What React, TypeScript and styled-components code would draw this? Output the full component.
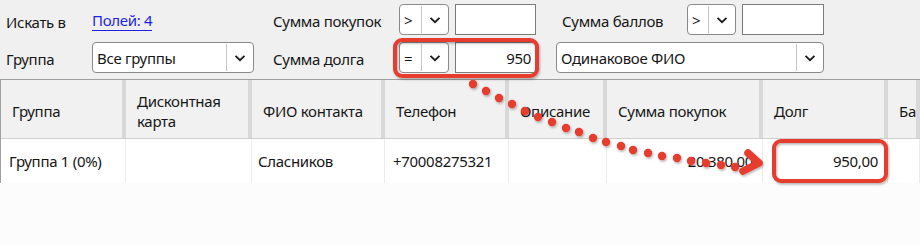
import React from "react";
import styled, { createGlobalStyle } from "styled-components";

const GlobalStyle = createGlobalStyle`
  html, body {
    margin: 0;
    padding: 0;
    background: #fcfcfc;
  }
  body {
    font-family: "Noto Sans", "Open Sans", sans-serif;
    font-size: 15px;
    letter-spacing: -0.3px;
    color: #161616;
  }
`;

const Page = styled.div`
  position: relative;
  width: 920px;
  height: 246px;
  overflow: hidden;
  background: #fcfcfc;
`;

const FilterPanel = styled.div`
  display: grid;
  grid-template-columns: 86px 181px 126px 157px 268px;
  grid-template-rows: 31px 31px;
  row-gap: 7px;
  align-items: center;
  padding: 4px 0 6px 6px;
  background: #f0f0f0;
  border-bottom: 1px solid #a0a0a0;
`;

const Label = styled.span<{ $shift?: number; $indent?: number }>`
  white-space: nowrap;
  padding-top: ${(p) => p.$shift ?? 0}px;
  padding-left: ${(p) => p.$indent ?? 0}px;
`;

const FieldsLink = styled.a`
  justify-self: start;
  color: #1f1fe8;
  text-decoration: none;
  border-bottom: 1px solid #1f1fe8;
  padding-top: 3px;
  line-height: 19px;
  cursor: pointer;
`;

const PointsField = styled.div`
  display: grid;
  grid-template-columns: 131px auto;
  align-items: center;
`;

const Pair = styled.div`
  display: flex;
  gap: 6px;
  height: 31px;
`;

const Combo = styled.div<{ $width: number }>`
  display: flex;
  width: ${(p) => p.$width}px;
  height: 31px;
  box-sizing: border-box;
  border: 1px solid #8a8a8a;
  border-radius: 4px;
  background: #ffffff;
`;

const ComboValue = styled.div`
  flex: 1;
  display: flex;
  align-items: center;
  padding-left: 4px;
  white-space: nowrap;
  overflow: hidden;
`;

const ComboButton = styled.div`
  flex: none;
  width: 26px;
  display: flex;
  align-items: center;
  justify-content: center;
  border-left: 1px solid #c6c6c6;
  margin: 1px 0;
`;

const TextBox = styled.div<{ $width: number }>`
  width: ${(p) => p.$width}px;
  height: 31px;
  box-sizing: border-box;
  border: 1px solid #7a7a7a;
  background: #ffffff;
  display: flex;
  align-items: center;
  justify-content: flex-end;
  padding-right: 4px;
`;

const Grid = styled.div`
  border-left: 1px solid #a0a0a0;
`;

const columns = "125px 126px 133px 124px 98px 156px 125px 1fr";

const HeaderRow = styled.div`
  display: grid;
  grid-template-columns: ${columns};
  height: 59px;
  box-sizing: border-box;
  background: #f1f1f1;
  border-bottom: 1px solid #cfcfcf;
`;

const HeaderCell = styled.div`
  display: flex;
  align-items: center;
  box-sizing: border-box;
  padding: 3px 4px 0 11px;
  line-height: 20px;
  border-right: 4px solid #d8d8d8;
  overflow: hidden;
  white-space: pre-line;
`;

const DataRow = styled.div`
  display: grid;
  grid-template-columns: ${columns};
  height: 44px;
  background: #ffffff;
`;

const DataCell = styled.div<{ $right?: boolean; $padLeft?: number }>`
  display: flex;
  align-items: center;
  justify-content: ${(p) => (p.$right ? "flex-end" : "flex-start")};
  box-sizing: border-box;
  padding: 0 9px 0 ${(p) => p.$padLeft ?? 6}px;
  border-right: 1px solid #ececec;
  white-space: nowrap;
  overflow: hidden;
`;

const Overlay = styled.svg`
  position: absolute;
  left: 0;
  top: 0;
  pointer-events: none;
`;

const Chevron = () => (
  <svg width="12" height="8" viewBox="0 0 12 8">
    <path d="M1.5 1.8 L6 6.2 L10.5 1.8" fill="none" stroke="#1a1a1a" strokeWidth="1.8" />
  </svg>
);

const Select = ({ value, width }: { value: string; width: number }) => (
  <Combo $width={width}>
    <ComboValue>{value}</ComboValue>
    <ComboButton>
      <Chevron />
    </ComboButton>
  </Combo>
);

const headers = [
  "Группа",
  "Дисконтная\nкарта",
  "ФИО контакта",
  "Телефон",
  "Описание",
  "Сумма покупок",
  "Долг",
  "Баллы",
];

const dots: [number, number][] = [
  [473, 84], [486, 91], [499, 98], [512, 104], [525, 111], [538, 117],
  [552, 122], [566, 128], [579, 132], [593, 138], [606, 142], [621, 146],
  [633, 150], [648, 153], [662, 156], [677, 158], [691, 161], [706, 163],
  [721, 165], [735, 167],
];

const RED = "#e63c2e";

export default function App() {
  return (
    <Page>
      <GlobalStyle />
      <FilterPanel>
        <Label $shift={4}>Искать в</Label>
        <FieldsLink>Полей: 4</FieldsLink>
        <Label $shift={3}>Сумма покупок</Label>
        <Pair>
          <Select value=">" width={50} />
          <TextBox $width={81} />
        </Pair>
        <PointsField>
          <Label $shift={3} $indent={6}>
            Сумма баллов
          </Label>
          <Pair>
            <Select value=">" width={49} />
            <TextBox $width={82} />
          </Pair>
        </PointsField>

        <Label $shift={2}>Группа</Label>
        <Select value="Все группы" width={162} />
        <Label $shift={2}>Сумма долга</Label>
        <Pair>
          <Select value="=" width={50} />
          <TextBox $width={81}>950</TextBox>
        </Pair>
        <Select value="Одинаковое ФИО" width={268} />
      </FilterPanel>

      <Grid>
        <HeaderRow>
          {headers.map((h) => (
            <HeaderCell key={h}>{h}</HeaderCell>
          ))}
        </HeaderRow>
        <DataRow>
          <DataCell $padLeft={8}>Группа 1 (0%)</DataCell>
          <DataCell />
          <DataCell>Сласников</DataCell>
          <DataCell $padLeft={8}>+70008275321</DataCell>
          <DataCell />
          <DataCell $right>20 380,00</DataCell>
          <DataCell $right>950,00</DataCell>
          <DataCell />
        </DataRow>
      </Grid>

      <Overlay width="920" height="246" viewBox="0 0 920 246">
        <defs>
          <filter id="shade" x="-20%" y="-20%" width="140%" height="140%">
            <feDropShadow dx="1" dy="1.5" stdDeviation="1" floodColor="#000" floodOpacity="0.3" />
          </filter>
        </defs>
        <g filter="url(#shade)">
          <rect x="395" y="40" width="142" height="36" rx="7" fill="none" stroke={RED} strokeWidth="4" />
          <rect x="774" y="141" width="112" height="40" rx="7" fill="none" stroke={RED} strokeWidth="4" />
          {dots.map(([x, y]) => (
            <circle key={`${x}-${y}`} cx={x} cy={y} r="4.2" fill={RED} />
          ))}
          <polyline
            points="748,153 759,163 743,171"
            fill="none"
            stroke={RED}
            strokeWidth="7.5"
            strokeLinecap="round"
            strokeLinejoin="round"
          />
        </g>
      </Overlay>
    </Page>
  );
}
